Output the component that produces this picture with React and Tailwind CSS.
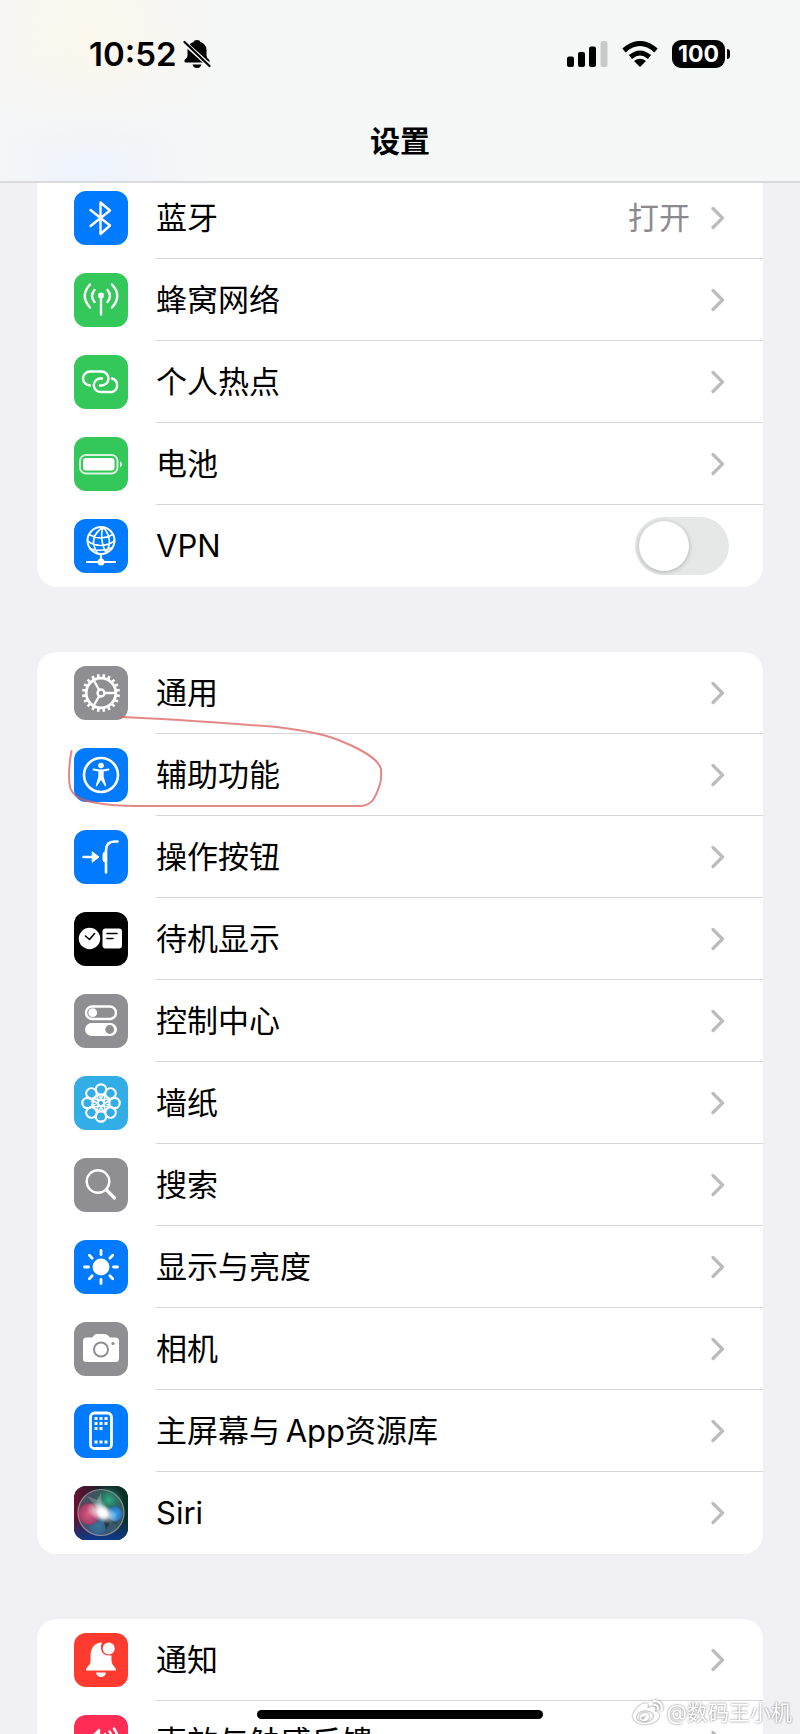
import { FaWeibo } from "react-icons/fa";

const GEAR_TEETH = Array.from({ length: 20 }, (_, i) => i * 18 + 9);
const EIGHTHS = [0, 45, 90, 135, 180, 225, 270, 315];

const IconTile = ({ color, children }) => (
  <svg
    viewBox="0 0 54 54"
    className={`size-[54px] shrink-0 rounded-xl ${color}`}
    fill="none"
    stroke="white"
    strokeWidth="2.4"
    strokeLinecap="round"
    strokeLinejoin="round"
    aria-hidden="true"
  >
    {children}
  </svg>
);

const BluetoothIcon = () => (
  <IconTile color="bg-[#007aff]">
    <path d="M16.5 19 36 34.5 26.5 43V11.5L36 19.5 16.5 35" />
  </IconTile>
);

const CellularIcon = () => (
  <IconTile color="bg-[#34c759]">
    <circle cx="27" cy="22.5" r="3" fill="white" stroke="none" />
    <path d="M27 24v17.5M20.500 17q-5 6 0 12M33.500 17q5 6 0 12M16 11.500q-10.500 11.500 0 23M38 11.500q10.500 11.500 0 23" />
  </IconTile>
);

const HotspotIcon = () => (
  <IconTile color="bg-[#34c759]">
    <path d="M16 30.500a7 7 0 0 1 0-14h11.500a7 7 0 0 1 0 14h-1.500M38 23.500a7 7 0 0 1 0 13.500h-11.500a6.700 6.700 0 0 1 0-13.500h1.500" />
  </IconTile>
);

const BatteryIcon = () => (
  <IconTile color="bg-[#34c759]">
    <rect x="6" y="18" width="37.500" height="18.500" rx="6" strokeWidth="2" stroke="#d6f4de" />
    <rect x="9" y="21" width="31.500" height="12.500" rx="3" fill="white" stroke="none" />
    <path d="M46 24q4.500 3.250 0 6.500z" fill="#d6f4de" stroke="none" />
  </IconTile>
);

const VpnIcon = () => (
  <IconTile color="bg-[#007aff]">
    <circle cx="27" cy="21.500" r="13.500" strokeWidth="2" />
    <path
      d="M29 8q-16 11-5 27M29 8q11 12 3 26M29 8q-4 12 3 26M15 15.500q12 7 24 0M13.500 22q13 9 27 0M17 30q10 3 20-1"
      strokeWidth="1.600"
    />
    <path d="M27 35v5M13 43h28" strokeWidth="2.200" />
    <circle cx="27" cy="43" r="3.500" fill="white" stroke="none" />
  </IconTile>
);

const GearIcon = () => (
  <IconTile color="bg-[#8e8e93]">
    <circle cx="27" cy="27" r="14.800" strokeWidth="2.800" />
    {GEAR_TEETH.map((angle) => (
      <path key={angle} d="M27 8v4" strokeWidth="2.600" strokeLinecap="butt" transform={`rotate(${angle} 27 27)`} />
    ))}
    <circle cx="27" cy="27" r="3.500" />
    <path d="M30.500 27H41M25.200 24 19.800 14.500M25.200 30 19.800 39.500" />
  </IconTile>
);

const AccessibilityIcon = () => (
  <IconTile color="bg-[#007aff]">
    <circle cx="27" cy="27" r="17" strokeWidth="2.600" />
    <circle cx="27" cy="17.500" r="2.800" fill="white" stroke="none" />
    <path d="M19.500 21.500 25 22.500h4l5.500-1" strokeWidth="2" />
    <path d="M25 22.500h4V29l2.500 8.500L27 30.500 22.500 37.500 25 29z" fill="white" strokeWidth="1.400" />
  </IconTile>
);

const ActionIcon = () => (
  <IconTile color="bg-[#007aff]">
    <path d="M9.500 27H19" strokeWidth="2.600" />
    <path d="M18.500 22 25 27l-6.500 5z" fill="white" strokeWidth="1" />
    <path d="M43.500 11.500h-3q-8.500 0-8.500 9V42.500" strokeWidth="2.600" />
    <path d="M31 22q-2 0-2 2.500v5q0 2.500 2 2.500z" fill="white" strokeWidth="1" />
  </IconTile>
);

const StandbyIcon = () => (
  <IconTile color="bg-black">
    <circle cx="15.500" cy="26.500" r="10.700" fill="white" stroke="none" />
    <rect x="28.500" y="16.500" width="19.500" height="20" rx="3" fill="white" stroke="none" />
    <path d="m11.500 24 4 3.500 5-6M33 21.500h10M33 26.500h6" stroke="black" strokeWidth="1.600" />
  </IconTile>
);

const ControlIcon = () => (
  <IconTile color="bg-[#8e8e93]">
    <rect x="12" y="12.500" width="30" height="12.500" rx="6.200" />
    <circle cx="18.700" cy="18.700" r="4.400" fill="white" stroke="none" />
    <rect x="11" y="29" width="32" height="13" rx="6.500" fill="white" stroke="none" />
    <circle cx="35.700" cy="35.500" r="4.400" fill="#8e8e93" stroke="none" />
  </IconTile>
);

const WallpaperIcon = () => (
  <IconTile color="bg-[#32ade6]">
    {EIGHTHS.map((angle) => (
      <g key={angle} transform={`rotate(${angle} 27 27)`}>
        <circle cx="27" cy="13.500" r="5.200" strokeWidth="2.200" />
        <path d="M23.500 17.500 29.500 26M30.500 17.500 24.500 26" strokeWidth="1.600" />
      </g>
    ))}
    <circle cx="27" cy="27" r="2" fill="#32ade6" stroke="none" />
  </IconTile>
);

const SearchIcon = () => (
  <IconTile color="bg-[#8e8e93]">
    <circle cx="24" cy="23.500" r="11.300" />
    <path d="m32.500 32 8 8" strokeWidth="3.200" />
  </IconTile>
);

const SunIcon = () => (
  <IconTile color="bg-[#007aff]">
    <circle cx="27" cy="27" r="8.400" fill="white" stroke="none" />
    {EIGHTHS.map((angle) => (
      <path key={angle} d="M27 10.500v4" strokeWidth="2.800" transform={`rotate(${angle} 27 27)`} />
    ))}
  </IconTile>
);

const CameraIcon = () => (
  <IconTile color="bg-[#8e8e93]">
    <path
      d="M12.500 15.500h5.500l2.500-2.500q1-1 2.500-1h8q1.500 0 2.500 1l2.500 2.500h5.500q3.500 0 3.500 3.500v17.500q0 3.500-3.500 3.500h-29q-3.500 0-3.500-3.500V19q0-3.500 3.500-3.500z"
      fill="white"
      stroke="none"
    />
    <circle cx="27" cy="27.500" r="7" stroke="#8e8e93" strokeWidth="2" />
    <circle cx="39" cy="21.500" r="1.600" fill="#8e8e93" stroke="none" />
  </IconTile>
);

const HomeScreenIcon = () => (
  <IconTile color="bg-[#007aff]">
    <rect x="16.500" y="9" width="21" height="35.500" rx="4" strokeWidth="2.800" />
    <path
      d="M20.500 13h3v3h-3zM25.500 13h3v3h-3zM30.500 13h3v3h-3zM20.500 18h3v3h-3zM25.500 18h3v3h-3zM30.500 18h3v3h-3zM20.500 23h3v3h-3zM25.500 23h3v3h-3zM20.500 36.500h3v3h-3zM25.500 36.500h3v3h-3zM30.500 36.500h3v3h-3z"
      fill="white"
      stroke="none"
    />
  </IconTile>
);

const SiriIcon = () => (
  <IconTile color="bg-[#101820]">
    <defs>
      <linearGradient id="siri-bg" x1="0" y1="0" x2="1" y2="0">
        <stop offset="0" stopColor="#6b1033" />
        <stop offset="0.5" stopColor="#14222b" />
        <stop offset="1" stopColor="#073024" />
      </linearGradient>
      <linearGradient id="siri-floor" x1="0" y1="0" x2="0" y2="1">
        <stop offset="0.6" stopColor="#0f3a8c" stopOpacity="0" />
        <stop offset="1" stopColor="#0f3a8c" />
      </linearGradient>
      <radialGradient id="siri-blue">
        <stop offset="0" stopColor="#3aa8f0" />
        <stop offset="0.7" stopColor="#2a80d8" stopOpacity="0.8" />
        <stop offset="1" stopColor="#1a4fb0" stopOpacity="0" />
      </radialGradient>
      <radialGradient id="siri-pink">
        <stop offset="0" stopColor="#f2628a" />
        <stop offset="0.8" stopColor="#d0336a" stopOpacity="0.85" />
        <stop offset="1" stopColor="#a01c50" stopOpacity="0" />
      </radialGradient>
      <radialGradient id="siri-green">
        <stop offset="0" stopColor="#2fae86" />
        <stop offset="1" stopColor="#157050" stopOpacity="0" />
      </radialGradient>
      <radialGradient id="siri-glow">
        <stop offset="0" stopColor="white" />
        <stop offset="0.3" stopColor="white" stopOpacity="0.8" />
        <stop offset="1" stopColor="white" stopOpacity="0" />
      </radialGradient>
    </defs>
    <g stroke="none">
      <rect width="54" height="54" fill="url(#siri-bg)" />
      <rect width="54" height="54" fill="url(#siri-floor)" />
      <circle cx="27" cy="26.500" r="23" fill="#4b6a72" opacity="0.7" />
      <circle cx="35" cy="14" r="16" fill="url(#siri-green)" />
      <circle cx="24" cy="39" r="12" fill="url(#siri-blue)" opacity="0.4" />
      <circle cx="15" cy="28" r="12" fill="url(#siri-pink)" opacity="0.85" />
      <circle cx="41" cy="28" r="9" fill="url(#siri-blue)" />
      <path d="M28 28 44 38 36 36 32 44z" fill="#16212d" opacity="0.6" />
      <path d="M28 27 13 10l10 4 4-7z" fill="#c5dcd8" opacity="0.3" />
      <ellipse cx="28" cy="27" rx="17" ry="9" fill="url(#siri-glow)" transform="rotate(25 28 27)" />
      <ellipse cx="28" cy="24" rx="6" ry="13" fill="url(#siri-glow)" opacity="0.6" transform="rotate(-20 28 24)" />
      <circle cx="29" cy="27" r="7" fill="url(#siri-glow)" />
    </g>
    <circle cx="27" cy="26.500" r="23" stroke="#b8a6ad" strokeOpacity="0.7" strokeWidth="1.200" />
  </IconTile>
);

const NotificationIcon = () => (
  <IconTile color="bg-[#ff3b30]">
    <g fill="white" stroke="none">
      <path d="M28 9.500q-11 .5-11.500 13v6q0 3-3 5.500-2 2-1.500 3.500h30q.5-1.500-1.500-3.500-3-3-3-6v-5.500q-9 1-10.500-6.500-.5-3 1-6.500z" />
      <circle cx="34.700" cy="15.500" r="6" />
      <path d="M22 39.500h10q-1 4.500-5 4.500t-5-4.500z" />
    </g>
  </IconTile>
);

const SoundIcon = () => (
  <IconTile color="bg-[#ff2d55]">
    <path d="M11 23h6l8-8v24l-8-7h-6z" fill="white" />
    <path d="M31 19q5 8 0 16M35.500 16.500q7 10.500 0 21M40 13.500q9 13.500 0 27" />
  </IconTile>
);

const GROUPS = [
  [
    { id: "bluetooth", label: "蓝牙", Icon: BluetoothIcon, value: "打开" },
    { id: "cellular", label: "蜂窝网络", Icon: CellularIcon },
    { id: "hotspot", label: "个人热点", Icon: HotspotIcon },
    { id: "battery", label: "电池", Icon: BatteryIcon },
    { id: "vpn", label: "VPN", Icon: VpnIcon, toggle: true },
  ],
  [
    { id: "general", label: "通用", Icon: GearIcon },
    { id: "accessibility", label: "辅助功能", Icon: AccessibilityIcon },
    { id: "action", label: "操作按钮", Icon: ActionIcon },
    { id: "standby", label: "待机显示", Icon: StandbyIcon },
    { id: "control", label: "控制中心", Icon: ControlIcon },
    { id: "wallpaper", label: "墙纸", Icon: WallpaperIcon },
    { id: "search", label: "搜索", Icon: SearchIcon },
    { id: "display", label: "显示与亮度", Icon: SunIcon },
    { id: "camera", label: "相机", Icon: CameraIcon },
    { id: "home", label: "主屏幕与\u2009App资源库", Icon: HomeScreenIcon },
    { id: "siri", label: "Siri", Icon: SiriIcon },
  ],
  [
    { id: "notifications", label: "通知", Icon: NotificationIcon },
    { id: "sounds", label: "声效与触感反馈", Icon: SoundIcon },
  ],
];

const Chevron = () => (
  <svg viewBox="0 0 14 24" className="h-6 w-3.5 shrink-0" fill="none" stroke="#bcbcbf" strokeWidth="3.200" strokeLinecap="round" strokeLinejoin="round" aria-hidden="true">
    <path d="m2 2.500 9.500 9.500L2 21.500" />
  </svg>
);

const Row = ({ item, last }) => {
  const { id, label, Icon, value, toggle } = item;
  const body = `flex h-full min-w-0 flex-1 items-center ${last ? "" : "border-b border-[#d6d6d9]"}`;

  if (toggle) {
    return (
      <li className="flex h-[82px] items-center gap-7 pl-[37px]">
        <Icon />
        <div className={`${body} pr-[34px]`}>
          <label htmlFor={id} className="flex-1">{label}</label>
          <input
            id={id}
            type="checkbox"
            role="switch"
            className="h-[58px] w-[94px] shrink-0 appearance-none rounded-full bg-[#e6e8e8] p-1 before:block before:size-[50px] before:rounded-full before:bg-white before:shadow-[0_1px_5px_rgba(0,0,0,0.25)] checked:bg-[#34c759] checked:before:ml-9"
          />
        </div>
      </li>
    );
  }

  return (
    <li>
      <a href={`#${id}`} className="flex h-[82px] items-center gap-7 pl-[37px]">
        <Icon />
        <span className={`${body} pr-[38px]`}>
          <span className="flex-1 truncate">{label}</span>
          {value && <span className="mr-[21px] text-[#8a8a8e]">{value}</span>}
          <Chevron />
        </span>
      </a>
    </li>
  );
};

const StatusBar = () => (
  <div className="flex h-[108px] items-center justify-between pr-[70px] pl-[89px]">
    <div className="flex items-center gap-1.5">
      <span className="text-[33px] leading-10 font-semibold">10:52</span>
      {/* muted bell */}
      <svg viewBox="0 0 28 28" className="size-7" aria-hidden="true">
        <path d="M14 0q3 0 3.500 2 6 2 6 8.500v5q0 2 2.500 4 1.500 1.500 0 3H2q-1.500-1.500 0-3 2.500-2 2.500-4v-5Q4.500 4 10.500 2q.5-2 3.500-2z" />
        <path d="M9.500 24.500h9q-1 3.500-4.500 3.500t-4.500-3.500z" />
        <path d="m1 2.500 26 23.500" stroke="#f7f7f6" strokeWidth="4.500" />
        <path d="m1.500 2 25 24" stroke="black" strokeWidth="2.200" strokeLinecap="round" />
      </svg>
    </div>
    <div className="flex items-center gap-3.5">
      <svg viewBox="0 0 41 26" className="h-[26px] w-[41px]" aria-hidden="true">
        <rect x="0" y="15.500" width="7" height="10.500" rx="2" />
        <rect x="11" y="11" width="7" height="15" rx="2" />
        <rect x="22" y="5.500" width="7" height="20.500" rx="2" />
        <rect x="33.500" y="0" width="7" height="26" rx="2" fill="#c8c9c9" />
      </svg>
      <svg viewBox="0 0 36 26" className="h-[26px] w-9" fill="none" stroke="black" strokeWidth="5" aria-hidden="true">
        <path d="M2 9.500q16-14 32 0M8.500 16q9.500-8 19 0" />
        <path d="M12 20q6-4.500 12 0l-6 6z" fill="black" stroke="none" />
      </svg>
      <div className="flex items-center gap-0.5">
        <span className="flex h-7 w-[53px] items-center justify-center rounded-[9px] bg-black text-[23px] leading-7 font-bold text-white">100</span>
        <span className="h-2.5 w-[3px] rounded-r-full bg-black" />
      </div>
    </div>
  </div>
);

// hand-drawn loop round the accessibility row
const RedLoop = () => (
  <svg viewBox="0 0 350 164" className="pointer-events-none absolute top-0 left-0 h-[164px] w-[350px]" fill="none" stroke="#d9605f" strokeWidth="2" strokeLinecap="round" strokeOpacity="0.75" aria-hidden="true">
    <path d="M34.500 99Q31 117 32.500 132C34 146 48 149 60 151 75 154 85 154 100 154H322C336 154 339 144 343 132 345 126 344 122 344 117 341 105 315 93 296 86 280 80 255 77 240 75 200 72 160 69 125 67L84 65" />
  </svg>
);

export default function App() {
  return (
    <div className="relative h-screen overflow-hidden bg-[#f0f0f5] font-[Inter,'Noto_Sans_CJK_SC',sans-serif] text-[31px] leading-[42px] text-black" lang="zh-CN">
      <header className="sticky top-0 z-10 h-[183px] border-b-2 border-[#d9dade] bg-[#f6f7f7] bg-[radial-gradient(circle_at_90px_35px,#fcf8ec,transparent_130px),radial-gradient(circle_at_90px_160px,#edf3fc,transparent_120px)]">
        <StatusBar />
        <h1 className="text-center text-[30px] leading-[66px] font-bold">设置</h1>
      </header>

      <main className="-mt-1.5 flex flex-col gap-[65px] px-[37px]">
        {GROUPS.map((items, i) => (
          <ul
            key={i}
            className={`relative overflow-hidden bg-white ${i === 0 ? "rounded-b-[20px]" : "rounded-[20px]"}`}
          >
            {items.map((item, j) => (
              <Row key={item.id} item={item} last={j === items.length - 1} />
            ))}
            {i === 1 && <RedLoop />}
          </ul>
        ))}
      </main>

      {/* home indicator */}
      <div className="absolute bottom-[15px] left-1/2 h-[9px] w-[286px] -translate-x-1/2 rounded-full bg-black" />

      <div className="absolute right-2 bottom-1.5 flex items-center gap-1 text-[21px] leading-7 text-white [filter:drop-shadow(0_0_1px_#777)]">
        <FaWeibo className="size-[30px]" aria-hidden="true" />
        <span>@数码王小机</span>
      </div>
    </div>
  );
}
